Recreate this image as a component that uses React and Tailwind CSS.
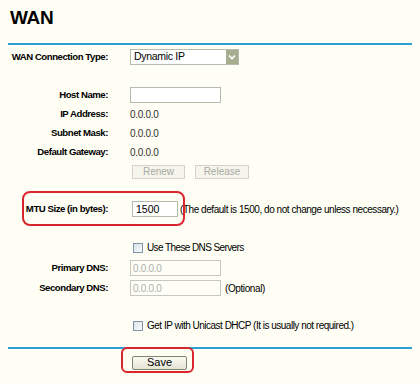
import { useState } from "react";

const Label = ({ children }) => (
  <div className="w-[108px] shrink-0 text-right font-bold text-[9.6px] tracking-[-0.45px]">{children}</div>
);

const Row = ({ label, className = "", children }) => (
  <div className={`flex items-center ${className}`}>
    <Label>{label}</Label>
    <div className="ml-[22px] flex items-center">{children}</div>
  </div>
);

const Checkbox = () => (
  <span className="w-[10px] h-[10px] border border-[#7f93a8] bg-gradient-to-br from-[#dde3ea] to-[#f8f9fb] inline-block" />
);

const App = () => {
  const [mtu, setMtu] = useState("1500");

  return (
    <div className="w-[420px] h-[384px] bg-[#fefef4] overflow-hidden text-[10px] text-black font-['Liberation_Sans',Arial,sans-serif]">
      <div className="h-[43px] pl-[10px] pt-[8px] text-[19px] font-bold tracking-[-0.3px] leading-none">WAN</div>
      <div className="mx-[8px] h-[2px] bg-[#30a0d2]" />

      <Row label="WAN Connection Type:" className="mt-[4px] h-[16px]">
        <div className="w-[109px] h-[16px] border border-[#b5bbae] bg-white flex items-center">
          <span className="pl-[3px] flex-1 text-[10.5px] tracking-[-0.3px]">Dynamic IP</span>
          <span className="w-[12px] h-[14px] bg-[#a5ad90] flex items-center justify-center">
            <svg width="8" height="6" viewBox="0 0 8 6">
              <path d="M1 1.5 L4 4.5 L7 1.5" stroke="#fff" strokeWidth="1.6" fill="none" />
            </svg>
          </span>
        </div>
      </Row>

      <Row label="Host Name:" className="mt-[22px] h-[16px]">
        <div className="w-[91px] h-[16px] border border-[#b5bbae] bg-white" />
      </Row>

      <Row label="IP Address:" className="mt-[2px] h-[19px]">
        <span className="text-[#333] tracking-[-0.3px]">0.0.0.0</span>
      </Row>
      <Row label="Subnet Mask:" className="h-[19px]">
        <span className="text-[#333] tracking-[-0.3px]">0.0.0.0</span>
      </Row>
      <Row label="Default Gateway:" className="h-[19px]">
        <span className="text-[#333] tracking-[-0.3px]">0.0.0.0</span>
      </Row>

      <Row label="" className="mt-[3px] h-[14px]">
        <div className="flex gap-[10px] ml-[2px]">
          <button className="w-[53px] h-[14px] border border-[#d2d2c8] bg-[#f5f5ec] text-[#a9a9a3] text-[10px] leading-none">Renew</button>
          <button className="w-[54px] h-[14px] border border-[#d2d2c8] bg-[#f5f5ec] text-[#a9a9a3] text-[10px] leading-none">Release</button>
        </div>
      </Row>

      <div className="relative mt-[22px] h-[16px]">
        <div className="absolute left-[22px] top-[-10px] w-[163px] h-[35px] border-2 border-[#d8262c] rounded-[8px]" />
        <div className="flex items-center h-full">
          <Label>MTU Size (in bytes):</Label>
          <div className="ml-[22px] flex items-center">
            <input
              value={mtu}
              onChange={(e) => setMtu(e.target.value)}
              className="w-[46px] h-[16px] ml-[2px] border border-[#b5bbae] bg-white px-[3px] text-[10.5px] outline-none"
            />
            <span className="ml-[2px] tracking-[-0.45px]">(The default is 1500, do not change unless necessary.)</span>
          </div>
        </div>
      </div>

      <Row label="" className="mt-[23px] h-[15px]">
        <div className="ml-[3px] flex items-center gap-[4px]">
          <Checkbox />
          <span className="tracking-[-0.6px]">Use These DNS Servers</span>
        </div>
      </Row>

      <Row label="Primary DNS:" className="mt-[5px] h-[16px]">
        <div className="w-[91px] h-[16px] border border-[#c4c8bd] bg-[#fefef6] pl-[2px] text-[#b0b0b0] flex items-center tracking-[-0.3px]">0.0.0.0</div>
      </Row>
      <Row label="Secondary DNS:" className="mt-[4px] h-[16px]">
        <div className="w-[91px] h-[16px] border border-[#c4c8bd] bg-[#fefef6] pl-[2px] text-[#b0b0b0] flex items-center tracking-[-0.3px]">0.0.0.0</div>
        <span className="ml-[4px] tracking-[-0.4px]">(Optional)</span>
      </Row>

      <Row label="" className="mt-[22px] h-[15px]">
        <div className="ml-[3px] flex items-center gap-[4px]">
          <Checkbox />
          <span className="tracking-[-0.5px]">Get IP with Unicast DHCP (It is usually not required.)</span>
        </div>
      </Row>

      <div className="mt-[14px] mx-[8px] h-[2px] bg-[#30a0d2]" />

      <div className="mt-[6px] pl-[132px]">
        <div className="relative w-[55px]">
          <div className="absolute left-[-11px] top-[-8px] w-[73px] h-[26px] border-2 border-[#d8262c] rounded-[6px]" />
          <button className="relative w-[55px] h-[14px] border border-[#7d8670] rounded-[2px] bg-gradient-to-b from-[#fafaf2] to-[#e4e4d6] text-[11px] leading-none">Save</button>
        </div>
      </div>
    </div>
  );
};

export default App;
